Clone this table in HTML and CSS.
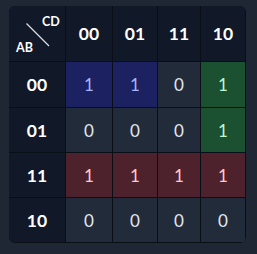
FILE: index.html
```html
<!DOCTYPE html>
<html lang="en">
<head>
<meta charset="UTF-8">
<meta name="viewport" content="width=device-width, initial-scale=1.0">
<title>K-Map</title>
<link rel="stylesheet" href="styles.css">
</head>
<body>
    <div class="kmap">
        <div class="cell head corner">
            <svg class="slash" width="56" height="55" viewBox="0 0 56 55">
                <line x1="17.5" y1="17.5" x2="40" y2="40" stroke="#e5e7eb" stroke-width="1.1"/>
            </svg>
            <span class="cd">CD</span>
            <span class="ab">AB</span>
        </div>
        <div class="cell head">00</div>
        <div class="cell head">01</div>
        <div class="cell head">11</div>
        <div class="cell head">10</div>

        <div class="cell head">00</div>
        <div class="cell blue">1</div>
        <div class="cell blue">1</div>
        <div class="cell">0</div>
        <div class="cell green">1</div>

        <div class="cell head">01</div>
        <div class="cell">0</div>
        <div class="cell">0</div>
        <div class="cell">0</div>
        <div class="cell green">1</div>

        <div class="cell head">11</div>
        <div class="cell red">1</div>
        <div class="cell red">1</div>
        <div class="cell red">1</div>
        <div class="cell red">1</div>

        <div class="cell head">10</div>
        <div class="cell">0</div>
        <div class="cell">0</div>
        <div class="cell">0</div>
        <div class="cell">0</div>
    </div>
</body>
</html>
```

FILE: styles.css
```css
/* Karnaugh map grid */
body {
    margin: 0;
    padding: 6px 0 0 9px;
    background-color: #1f2734;
    font-family: Lato, "Open Sans", sans-serif;
}
.kmap {
    display: grid;
    grid-template-columns: 56px 46px 44px 42px 44px;
    grid-template-rows: 55px 45px 44px 44px 44px;
    gap: 1px;
    padding: 0 1px 1px 0;
    width: max-content;
    background-color: #0a0e16;
    border-radius: 6px;
    overflow: hidden;
}
.cell {
    display: flex;
    align-items: center;
    justify-content: center;
    background-color: #222b3a;
    color: #e5e7eb;
    font-size: 17px;
}
.head {
    background-color: #111827;
    color: #ffffff;
    font-weight: bold;
    font-size: 17.5px;
}
.corner {
    position: relative;
}
.slash {
    position: absolute;
    left: 0;
    top: 0;
}
.cd, .ab {
    position: absolute;
    font-size: 12.5px;
}
.cd {
    left: 33px;
    top: 8px;
}
.ab {
    left: 7px;
    top: 34px;
}
.blue {
    background-color: #1c2161;
    color: #a5b4fc;
}
.green {
    background-color: #1b5030;
    color: #bbf7d0;
}
.red {
    background-color: #4d222d;
    color: #fecaca;
}
```
